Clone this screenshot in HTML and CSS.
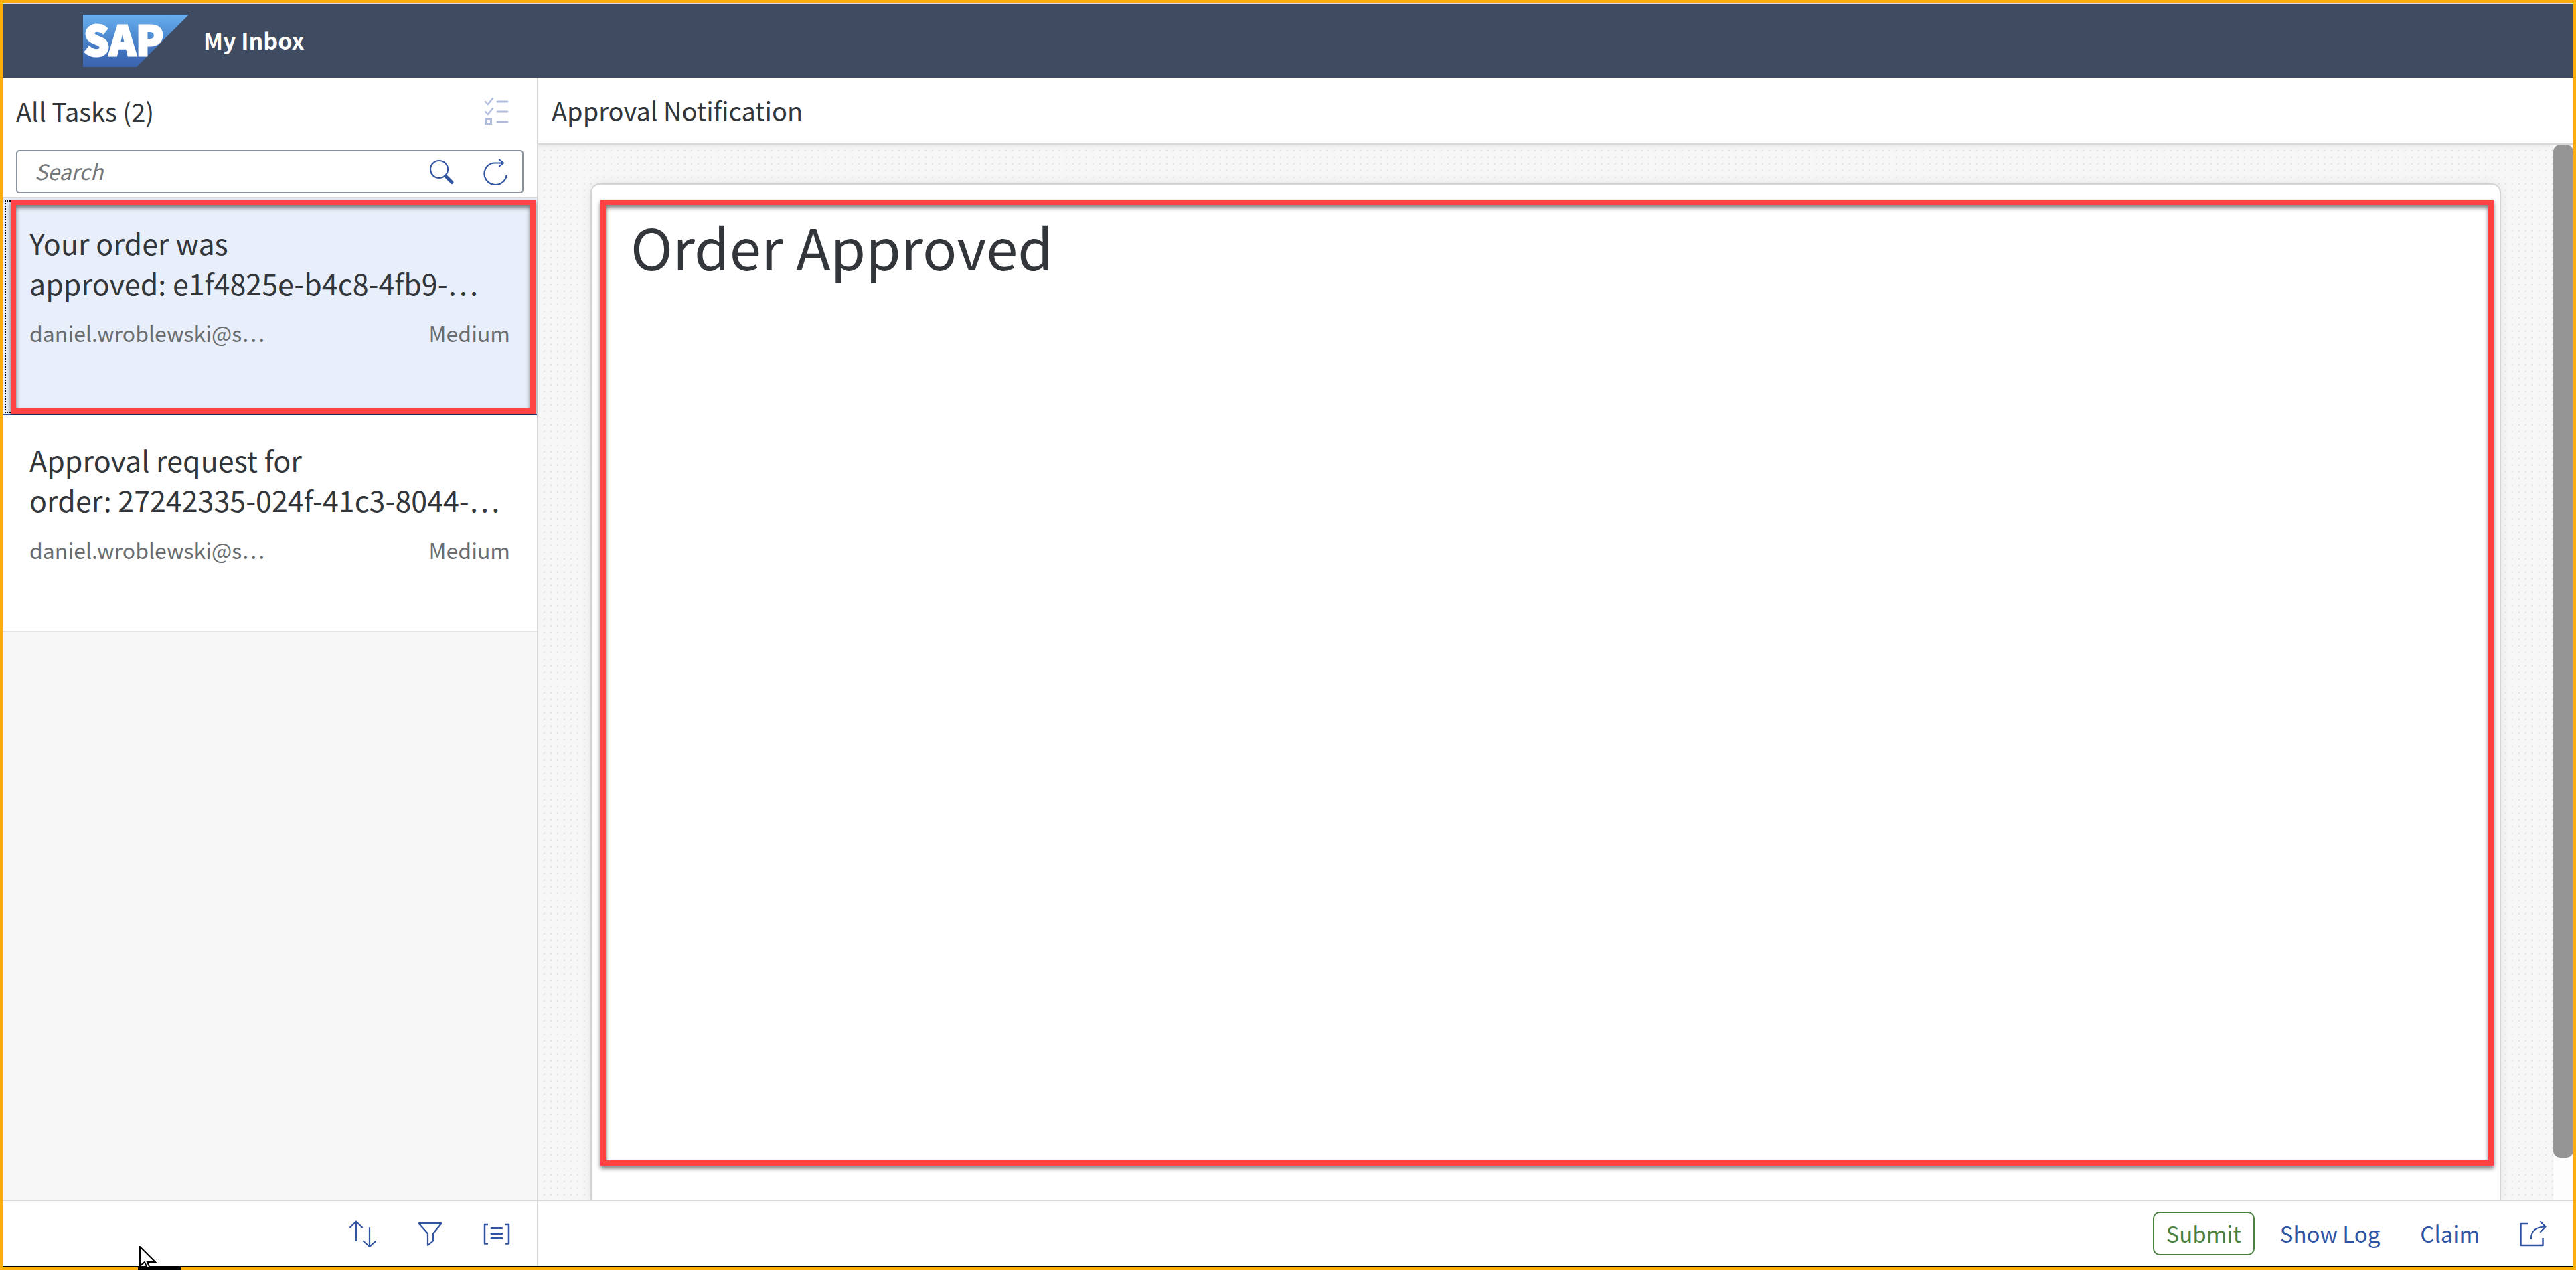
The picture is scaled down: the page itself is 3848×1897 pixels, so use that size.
FILE: index.html
```html
<!DOCTYPE html>
<html lang="en">
<head>
<meta charset="utf-8">
<title>My Inbox</title>
<link rel="stylesheet" href="styles.css">
</head>
<body>
<div class="app">
  <header class="shell">
    <svg class="logo" width="158" height="78" viewBox="0 0 158 78" role="img" aria-label="SAP">
      <defs><linearGradient id="logo-fill" x1="0" y1="0" x2="0" y2="1"><stop offset="0" stop-color="#68b0f0"/><stop offset=".5" stop-color="#4a83cb"/><stop offset=".85" stop-color="#3d69b5"/><stop offset="1" stop-color="#3c65b1"/></linearGradient></defs>
      <path d="M0 0H158L80 78H0Z" fill="url(#logo-fill)"/>
      <text class="logo-text" x="1" y="61">SAP</text>
    </svg>
    <h1 class="shell-title">My Inbox</h1>
  </header>

  <div class="columns">
    <aside class="master">
      <div class="bar">
        <h2 class="bar-title">All Tasks (2)</h2>
        <button class="icon-button" type="button" aria-label="Multiple selection" disabled>
          <svg width="40" height="40" viewBox="0 0 40 40" fill="none" stroke="currentColor" stroke-width="2.400" stroke-linecap="round"><path d="M3 6L7 10L14 1M3 21L7 25L14 16"/><path d="M21 6H36M21 21H36M21 36H36" stroke-width="3"/><path d="M3.500 31.500H11.500V39H3.500Z" stroke-width="3" stroke-linecap="butt"/></svg>
        </button>
      </div>
      <form class="search" role="search">
        <input class="search-input" type="text" placeholder="Search" aria-label="Search">
        <button class="search-button" type="button" aria-label="Search">
          <svg width="40" height="40" viewBox="0 0 40 40" fill="none" stroke="currentColor" stroke-linecap="round"><circle cx="16" cy="16" r="13" stroke-width="2.200"/><path d="M25.500 26L35 35.500" stroke-width="5"/></svg>
        </button>
        <button class="search-button" type="button" aria-label="Refresh">
          <svg width="40" height="40" viewBox="0 0 40 40" fill="none" stroke="currentColor" stroke-width="2.200" stroke-linecap="round" stroke-linejoin="round"><path d="M32 6.500H19C10 6.500 3.500 14 3.500 22.500C3.500 31.500 11 39 20 39C28.500 39 35.500 33 36.500 25.500M26 1.500L32 6.500L26 11.500"/></svg>
        </button>
      </form>
      <ul class="tasks">
        <li class="task-row">
          <a class="task task-selected" href="#approved">
            <span class="task-title">Your order was<br>approved: e1f4825e-b4c8-4fb9-…</span>
            <span class="task-meta"><span>daniel.wroblewski@s…</span><span>Medium</span></span>
          </a>
          <span class="callout callout-task"></span>
        </li>
        <li class="task-row">
          <a class="task" href="#request">
            <span class="task-title">Approval request for<br>order: 27242335-024f-41c3-8044-…</span>
            <span class="task-meta"><span>daniel.wroblewski@s…</span><span>Medium</span></span>
          </a>
        </li>
      </ul>
      <footer class="toolbar">
        <button class="icon-button" type="button" aria-label="Sort">
          <svg width="40" height="40" viewBox="0 0 40 40" fill="none" stroke="currentColor" stroke-width="2.200" stroke-linecap="round" stroke-linejoin="round"><path d="M10 30V1.500M1 10.500L10 1.500L19 10.500M30 11V39M21 31L30 39L39 31"/></svg>
        </button>
        <button class="icon-button" type="button" aria-label="Filter">
          <svg width="40" height="40" viewBox="0 0 40 40" fill="none" stroke="currentColor" stroke-width="2.200" stroke-linecap="round" stroke-linejoin="round"><path d="M4 5L17 19.500V37L25 30.500V19.500L37 5"/><path d="M4 4.500H37" stroke-width="3"/></svg>
        </button>
        <button class="icon-button" type="button" aria-label="Group">
          <svg width="40" height="40" viewBox="0 0 40 40" fill="none" stroke="currentColor" stroke-width="3" stroke-linecap="round" stroke-linejoin="round"><path d="M7 6H2V34.500H7M33 6H38V34.500H33" stroke-width="2.500" stroke-linecap="butt"/><path d="M12 11.500H28M12 19.500H28M12 26.500H28"/></svg>
        </button>
      </footer>
    </aside>

    <main class="detail">
      <div class="bar bar-line"><h2 class="bar-title">Approval Notification</h2></div>
      <div class="scroll">
        <div class="canvas">
          <article class="card"><h3 class="card-title">Order Approved</h3></article>
          <span class="callout callout-card"></span>
        </div>
        <div class="track"><div class="thumb"></div></div>
      </div>
      <footer class="toolbar">
        <button class="text-button accept" type="button">Submit</button>
        <button class="text-button" type="button">Show Log</button>
        <button class="text-button" type="button">Claim</button>
        <button class="icon-button" type="button" aria-label="Share">
          <svg width="40" height="40" viewBox="0 0 40 40" fill="none" stroke="currentColor" stroke-width="2.200" stroke-linecap="round" stroke-linejoin="round"><path d="M12 5H1.500V37H34.500V26" stroke-width="2.500" stroke-linecap="butt"/><path d="M17 27C17 16 24 9.500 38.500 9.500M31 2L38.500 9.500L31 17"/></svg>
        </button>
      </footer>
    </main>
  </div>
</div>
<div class="marker"></div>
<svg class="cursor" width="26" height="33" viewBox="0 0 26 33"><path d="M1 1V30L8 24L12 33H16L12 24H24Z" fill="#fff" stroke="#000" stroke-width="2"/></svg>
</body>
</html>
```
FILE: styles.css
```css
* { box-sizing: border-box; }

body {
  margin: 0;
  font-family: "Noto Sans CJK SC", "Noto Sans", sans-serif;
  font-size: 32px;
  line-height: 48px;
  color: #32363a;
}

h1, h2, h3, ul { margin: 0; padding: 0; font-weight: 400; }
button, input { font: inherit; }

.app {
  display: flex;
  flex-direction: column;
  height: 100vh;
  min-height: 1000px;
  border: 4px solid #fbad0b;
  background: #fff;
}

/* Shell header */
.shell {
  display: flex;
  align-items: center;
  gap: 22px;
  height: 112px;
  padding-left: 120px;
  border-top: 2px solid #d9dde3;
  background: #3f4b61;
  color: #fff;
}
.logo { display: block; overflow: visible; }
.logo-text { font-size: 60px; line-height: 60px; font-weight: 900; fill: #fff; stroke: #fff; stroke-width: 3px; }
.shell-title { font-size: 34px; font-weight: 700; padding-bottom: 2px; }

.columns {
  flex: 1;
  min-height: 0;
  display: grid;
  grid-template-columns: 800px 1fr;
  border-bottom: 2px solid #000;
}

/* Title bars and toolbars */
.bar {
  display: flex;
  align-items: center;
  justify-content: space-between;
  height: 100px;
  padding: 0 18px 0 20px;
}
.bar-line { border-bottom: 2px solid #d9d9d9; }
.bar-title { font-size: 38px; }
.toolbar {
  display: flex;
  align-items: center;
  justify-content: flex-end;
  gap: 16px;
  height: 99px;
  padding-right: 18px;
  border-top: 2px solid #d9d9d9;
  background: #fff;
}
.icon-button, .text-button {
  display: flex;
  align-items: center;
  justify-content: center;
  height: 65px;
  padding: 0 20px;
  border: 2px solid transparent;
  border-radius: 10px;
  background: none;
  color: #3054a2;
}
.icon-button:disabled { color: #afbbdc; }
.text-button { font-size: 33px; padding-bottom: 2px; }
.accept { padding-left: 18px; padding-right: 18px; border-color: #4a8040; color: #4a8040; }

/* Task list */
.master {
  display: flex;
  flex-direction: column;
  min-height: 0;
  border-right: 2px solid #d9d9d9;
}
.search {
  display: flex;
  align-items: center;
  height: 65px;
  margin: 8px 20px 5px;
  border: 2px solid #89919a;
  border-radius: 5px;
}
.search-input {
  flex: 1;
  min-width: 0;
  padding: 0 26px 4px;
  border: 0;
  outline: 0;
  background: none;
}
.search-input::placeholder { color: #74777a; font-style: italic; opacity: 1; }
.search-button {
  display: flex;
  justify-content: center;
  width: 80px;
  padding: 0;
  border: 0;
  background: none;
  color: #3054a2;
}
.tasks {
  flex: 1;
  min-height: 0;
  list-style: none;
  border-top: 2px solid #d9d9d9;
  background: #f7f7f7;
}
.task-row { position: relative; }
.task {
  display: flex;
  flex-direction: column;
  gap: 21px;
  min-height: 324px;
  padding: 36px 40px;
  border-bottom: 2px solid #e4e4e4;
  background: #fff;
  color: inherit;
  text-decoration: none;
}
.task-selected {
  border-bottom-color: #2f4f9a;
  outline: 2px dotted #000;
  outline-offset: -5px;
  background: #e8effa;
}
.task-title { font-size: 43px; line-height: 60px; white-space: nowrap; }
.task-meta { display: flex; justify-content: space-between; color: #6a6d70; }

/* Detail page */
.detail { display: flex; flex-direction: column; min-width: 0; min-height: 0; }
.scroll { flex: 1; min-height: 0; display: flex; }
.canvas {
  position: relative;
  flex: 1;
  padding: 58px 78px 0;
  overflow: hidden;
  background: radial-gradient(circle at 9px 9px, #e4e4e4 1px, transparent 2px) 0 0 / 10px 10px #f7f7f7;
  box-shadow: inset 0 6px 8px -4px rgba(0, 0, 0, .08);
}
.card {
  height: 100%;
  padding: 34px 58px;
  border: 2px solid #d4d4d4;
  border-bottom: 0;
  border-radius: 14px 14px 0 0;
  background: #fff;
  box-shadow: 0 0 16px rgba(0, 0, 0, .08);
}
.card-title { font-size: 85px; line-height: 114px; }
.track { width: 30px; background: #fdfdfd; }
.thumb { height: 96%; border-radius: 10px; background: #959595; }

/* Red highlight frames drawn over the page */
.callout {
  position: absolute;
  border: 8px solid #ff4343;
  filter: drop-shadow(0 4px 3px rgba(0, 0, 0, .55));
  pointer-events: none;
}
.callout-task { inset: 2px 2px 2px 12px; }
.callout-card { inset: 82px 89px 51px 93px; }

.cursor { position: absolute; left: 208px; bottom: 3px; }
.marker { position: absolute; left: 206px; bottom: 0; width: 64px; height: 4px; background: #000; }
```
